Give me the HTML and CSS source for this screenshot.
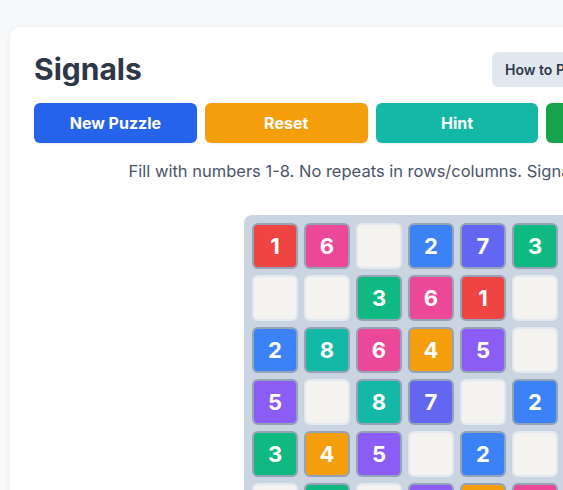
FILE: index.html
```html
<!DOCTYPE html>
<html lang="en">
<head>
<meta charset="utf-8">
<title>Signals</title>
<link rel="stylesheet" href="styles.css">
</head>
<body>
<div class="page">
  <div class="card">
    <header class="header">
      <h1 class="title">Signals</h1>
      <div class="actions">
        <button class="btn-light">How to Play</button>
        <button class="btn-light">Statistics</button>
        <button class="btn-light">Settings</button>
      </div>
    </header>
    <div class="controls">
      <button class="btn btn-blue">New Puzzle</button>
      <button class="btn btn-amber">Reset</button>
      <button class="btn btn-teal">Hint</button>
      <button class="btn btn-green">Check</button>
      <button class="btn btn-purple">Solve</button>
    </div>
    <p class="instructions">Fill with numbers 1-8. No repeats in rows/columns. Signals point to greater numbers.</p>
    <div class="board-wrap">
      <div class="board">
        <div class="cell n1">1</div><div class="cell n6">6</div><div class="cell empty"></div><div class="cell n2">2</div><div class="cell n7">7</div><div class="cell n3">3</div><div class="cell n8">8</div><div class="cell empty"></div>
        <div class="cell empty"></div><div class="cell empty"></div><div class="cell n3">3</div><div class="cell n6">6</div><div class="cell n1">1</div><div class="cell empty"></div><div class="cell n2">2</div><div class="cell n8">8</div>
        <div class="cell n2">2</div><div class="cell n8">8</div><div class="cell n6">6</div><div class="cell n4">4</div><div class="cell n5">5</div><div class="cell empty"></div><div class="cell n1">1</div><div class="cell n3">3</div>
        <div class="cell n5">5</div><div class="cell empty"></div><div class="cell n8">8</div><div class="cell n7">7</div><div class="cell empty"></div><div class="cell n2">2</div><div class="cell empty"></div><div class="cell n4">4</div>
        <div class="cell n3">3</div><div class="cell n4">4</div><div class="cell n5">5</div><div class="cell empty"></div><div class="cell n2">2</div><div class="cell empty"></div><div class="cell n6">6</div><div class="cell n7">7</div>
        <div class="cell empty"></div><div class="cell n3">3</div><div class="cell empty"></div><div class="cell n5">5</div><div class="cell n4">4</div><div class="cell n6">6</div><div class="cell n7">7</div><div class="cell empty"></div>
        <div class="cell n4">4</div><div class="cell empty"></div><div class="cell n7">7</div><div class="cell n8">8</div><div class="cell empty"></div><div class="cell n1">1</div><div class="cell empty"></div><div class="cell n5">5</div>
        <div class="cell n8">8</div><div class="cell n7">7</div><div class="cell empty"></div><div class="cell n1">1</div><div class="cell n6">6</div><div class="cell empty"></div><div class="cell n5">5</div><div class="cell n2">2</div>
      </div>
    </div>
  </div>
</div>
</body>
</html>
```
FILE: styles.css
```css
* { box-sizing: border-box; }
html, body {
  margin: 0;
  padding: 0;
  background: #f8f9fb;
  font-family: Inter, "Noto Sans", "Liberation Sans", sans-serif;
}
.page {
  padding: 27px 10px;
  width: 914px;
}
.card {
  width: 894px;
  background: #ffffff;
  border-radius: 10px;
  box-shadow: 0 1px 6px rgba(15, 23, 42, 0.06);
  padding: 24px;
}
.header {
  display: flex;
  justify-content: space-between;
  align-items: center;
  margin-bottom: 16px;
}
.title {
  margin: 0;
  font-size: 30px;
  line-height: 36px;
  font-weight: 700;
  color: #2d3748;
}
.actions {
  width: 388px;
  display: flex;
  gap: 8px;
}
.btn-light {
  border: none;
  background: #e2e8f0;
  color: #2d3748;
  font-family: inherit;
  font-size: 14px;
  font-weight: 600;
  line-height: 19px;
  padding: 8px 13px;
  border-radius: 6px;
}
.controls {
  display: grid;
  grid-template-columns: repeat(5, 1fr);
  gap: 8px;
  margin-bottom: 16px;
}
.btn {
  border: none;
  height: 40px;
  border-radius: 6px;
  color: #ffffff;
  font-family: inherit;
  font-size: 16px;
  font-weight: 700;
  box-shadow: 0 1px 2px rgba(0, 0, 0, 0.08);
}
.btn-blue { background: #2563eb; }
.btn-amber { background: #f59e0b; }
.btn-teal { background: #14b8a6; }
.btn-green { background: #16a34a; }
.btn-purple { background: #7c3aed; }
.instructions {
  margin: 0 0 32px;
  text-align: center;
  font-size: 16.5px;
  line-height: 24px;
  color: #4a5568;
}
.board-wrap {
  display: flex;
  justify-content: center;
}
.board {
  display: grid;
  grid-template-columns: repeat(8, 46px);
  grid-auto-rows: 46px;
  gap: 6px;
  padding: 8px;
  background: #cbd5e1;
  border-radius: 8px;
}
.cell {
  display: flex;
  align-items: center;
  justify-content: center;
  border-radius: 6px;
  border: 2px solid #94a3b8;
  color: #ffffff;
  font-size: 22px;
  font-weight: 700;
}
.cell.empty {
  background: #f5f3f0;
  border-color: #e2e8f0;
}
.n1 { background: #ef4444; }
.n2 { background: #3b82f6; }
.n3 { background: #10b981; }
.n4 { background: #f59e0b; }
.n5 { background: #8b5cf6; }
.n6 { background: #ec4899; }
.n7 { background: #6366f1; }
.n8 { background: #14b8a6; }
```
